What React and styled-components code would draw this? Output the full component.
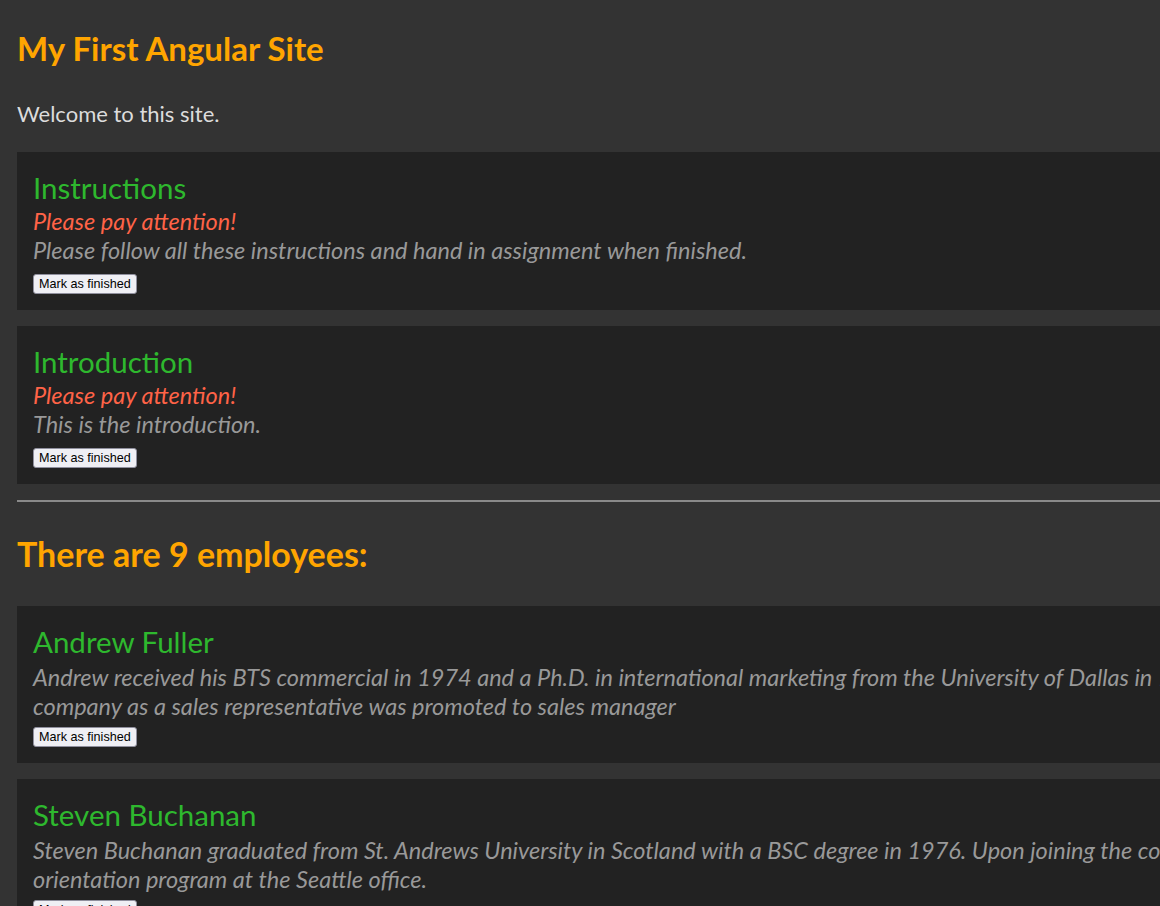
import React from "react";
import styled, { createGlobalStyle } from "styled-components";

const GlobalStyle = createGlobalStyle`
  html, body {
    margin: 0;
    padding: 0;
    background: #333333;
  }
  body {
    font-family: Lato, "Open Sans", sans-serif;
    color: #dddddd;
  }
`;

const sections = [
  {
    title: "Instructions",
    warning: true,
    text: "Please follow all these instructions and hand in assignment when finished."
  },
  {
    title: "Introduction",
    warning: true,
    text: "This is the introduction."
  }
];

const employees = [
  {
    name: "Andrew Fuller",
    notes:
      "Andrew received his BTS commercial in 1974 and a Ph.D. in international marketing from the University of Dallas in 1981. He is fluent in French and Italian and reads German. He joined the company as a sales representative was promoted to sales manager"
  },
  {
    name: "Steven Buchanan",
    notes:
      "Steven Buchanan graduated from St. Andrews University in Scotland with a BSC degree in 1976. Upon joining the company as a sales representative in 1992, he spent 6 months in an orientation program at the Seattle office."
  }
];

const Card = ({ title, warning, text }) =>
  <Panel>
    <PanelTitle>{title}</PanelTitle>
    {warning && <Warning>Please pay attention!</Warning>}
    <Body $plain={!warning}>{text}</Body>
    <FinishButton>Mark as finished</FinishButton>
  </Panel>
;

const App = () =>
  <>
    <GlobalStyle />
    <Page>
      <Title>My First Angular Site</Title>
      <Welcome>Welcome to this site.</Welcome>
      {sections.map((s) => <Card key={s.title} {...s} />)}
      <Rule />
      <Title as="h2" $small>There are 9 employees:</Title>
      {employees.map((e) => <Card key={e.name} title={e.name} text={e.notes} />)}
    </Page>
  </>
;

export default App;

const Page = styled.div`
  width: 1895px;
  padding: 0 0 0 17px;
  box-sizing: content-box;
`;

const Title = styled.h1`
  margin: 0;
  padding: ${(p) => (p.$small ? "33px 0 33px" : "29px 0 33px")};
  font-size: ${(p) => (p.$small ? "34px" : "33px")};
  line-height: 38px;
  font-weight: 700;
  color: #ffa500;
`;

const Welcome = styled.p`
  margin: 0 0 24px;
  font-size: 22px;
  line-height: 28px;
  color: #dcdcdc;
`;

const Panel = styled.section`
  background: #222222;
  padding: 17px 16px 16px;
  margin-bottom: 16px;
`;

const PanelTitle = styled.h2`
  margin: 0;
  font-size: 29.5px;
  font-weight: 400;
  line-height: 38px;
  color: #2eb82e;
`;

const Warning = styled.p`
  margin: 0;
  font-size: 23.5px;
  font-style: italic;
  line-height: 29px;
  color: #ff6347;
`;

const Body = styled.p`
  margin: ${(p) => (p.$plain ? "2px 0 6px" : "0 0 9px")};
  font-size: 23.5px;
  font-style: italic;
  line-height: 29px;
  color: #999999;
`;

const FinishButton = styled.button`
  display: block;
  box-sizing: border-box;
  height: 20px;
  padding: 0 5px;
  font-family: "Liberation Sans", Arial, sans-serif;
  font-size: 12.6px;
  color: #000;
  background: #efeff4;
  border: 1px solid #8f8f9d;
  border-radius: 3px;
  cursor: pointer;
`;

const Rule = styled.hr`
  margin: 0;
  border: none;
  border-top: 2px solid #8a8a8a;
`;
